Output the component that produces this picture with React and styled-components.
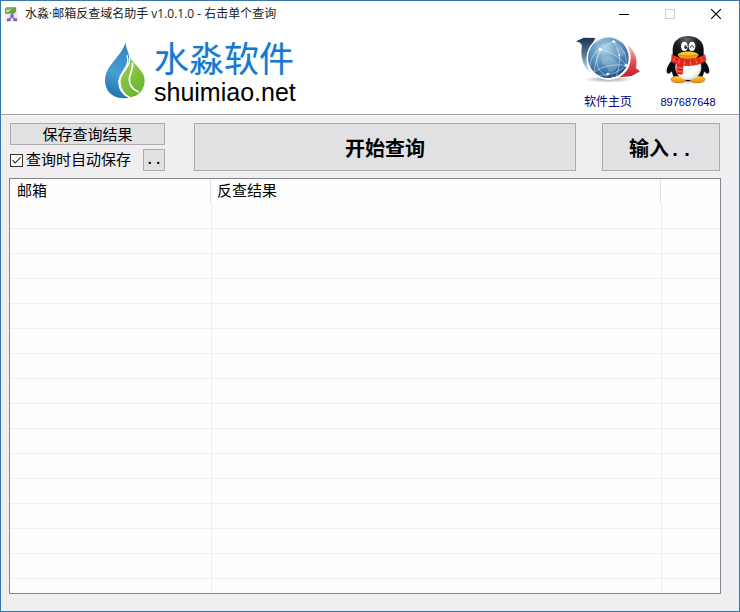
import React, { useState } from "react";
import styled, { createGlobalStyle } from "styled-components";

const GlobalStyle = createGlobalStyle`
* {
    box-sizing: border-box;
}
body {
    margin: 0;
    background: #f0eef1;
    font-family: "Liberation Sans", "Noto Sans CJK SC", sans-serif;
    color: #000;
}
button {
    font-family: inherit;
    color: inherit;
    padding: 0;
}
`;

const Window = styled.div`
display: flex;
flex-direction: column;
height: 100vh;
border: 1px solid #3279a8;
border-top-color: #3b76ad;
background: #f0eef1;
box-shadow: inset 0 -1px #e0f4fc, inset -1px 0 #e0f4fc, inset 1px 0 #e6f1f8;
`;
const TitleBar = styled.header`
display: flex;
align-items: center;
height: 25px;
padding-left: 3px;
background: #fff;
`;
const Title = styled.h1`
flex: 1;
margin: 0 0 0 6px;
font: 12px/24px "Open Sans", "Noto Sans CJK SC", sans-serif;
color: #222;
white-space: nowrap;
`;
const CaptionButton = styled.button`
display: flex;
align-items: center;
justify-content: center;
width: 46px;
height: 24px;
border: 0;
background: none;
color: ${(props) => (props.disabled ? "#ccc" : "#000")};
`;
const Banner = styled.section`
display: flex;
justify-content: space-between;
height: 89px;
padding: 6px 11px 0 103px;
background: #fff;
border-bottom: 1px solid #a0a0a0;
`;
const Brand = styled.div`
display: flex;
align-items: flex-start;
gap: 8px;
padding-top: 10px;
`;
const BrandText = styled.div`
display: flex;
flex-direction: column;
`;
const BrandName = styled.span`
font: 35px/36px "Liberation Sans", "Noto Sans CJK SC", sans-serif;
color: #1b76d1;
text-shadow: 0 0 2px #b8f0d8;
`;
const BrandSite = styled.span`
font-size: 25px;
line-height: 28px;
`;
const Links = styled.nav`
display: flex;
`;
const IconLink = styled.a`
display: flex;
flex-direction: column;
align-items: center;
justify-content: space-between;
width: 80px;
height: 78px;
font-size: ${(props) => props.$size}px;
line-height: 16px;
color: #000080;
text-decoration: none;
`;
const Toolbar = styled.section`
display: flex;
margin: 0 1px;
padding: 7px 18px 7px 8px;
border-top: 1px solid #f8f8f8;
`;
const SaveGroup = styled.div`
display: flex;
flex-direction: column;
gap: 4px;
width: 155px;
margin-right: 29px;
`;
const SaveRow = styled.div`
display: flex;
align-items: center;
justify-content: space-between;
`;
const PushButton = styled.button`
display: flex;
align-items: center;
justify-content: center;
width: ${(props) => props.$width || "auto"};
flex: ${(props) => (props.$grow ? 1 : "none")};
height: ${(props) => (props.$large ? 48 : 22)}px;
border: 1px solid #adabae;
background: #e1e0e2;
font: ${(props) => (props.$large ? "bold 20px" : "15px")} "Liberation Mono", "Noto Sans CJK SC", monospace;
`;
const InputButton = styled(PushButton)`
margin-left: 26px;
`;
const DotsButton = styled(PushButton)`
font-size: 14px;
font-weight: bold;
`;
const CheckLabel = styled.label`
display: flex;
align-items: center;
gap: 3px;
font-size: 15px;
line-height: 22px;
white-space: nowrap;
`;
const CheckBox = styled.input`
appearance: none;
width: 13px;
height: 13px;
margin: 0;
border: 1px solid #333;
background: #fff;
&:checked {
    background: #fff url("data:image/svg+xml,%3Csvg xmlns='http://www.w3.org/2000/svg' viewBox='0 0 11 11'%3E%3Cpath d='M1.5 5.2 4.2 8 9.7 2.3' fill='none' stroke='%23333' stroke-width='1.2'/%3E%3C/svg%3E") center / 11px 11px no-repeat;
}
`;
const ListPanel = styled.main`
flex: 1;
min-height: 0;
margin: 0 18px 17px 8px;
border: 1px solid #82858c;
background: #fefefe;
overflow: hidden;
`;
const ListTable = styled.table`
width: 100%;
table-layout: fixed;
border-collapse: separate;
border-spacing: 0;
font-size: 15px;
`;
const HeadCell = styled.th`
height: 25px;
padding: 0 1px 0 0;
font-weight: normal;
text-align: left;
width: ${(props) => props.$width || "auto"};
`;
const HeadLabel = styled.div`
height: 25px;
padding-left: ${(props) => (props.$first ? 7 : 5)}px;
line-height: 24px;
border-right: ${(props) => (props.$last ? "0" : "1px solid #e2e2e4")};
`;
const Cell = styled.td`
height: 25px;
padding: 0;
border-bottom: 1px solid #eeeff0;
border-right: ${(props) => (props.$last ? "0" : "1px solid #eeeff0")};
`;

const AppIcon = () => (
    <svg width="15" height="16" viewBox="0 0 15 16" aria-hidden="true">
        <rect x="1" y="1" width="13" height="15" rx="1" fill="#ecebf2" />
        <path d="M1 2.500 3 1h9v4.500L10.500 8H1z" fill="#8fbd62" />
        <path d="M1 2.500h8.500L12 1v4.500L9.500 7H1z" fill="#68a041" />
        <path d="M2 4h5M2 5.500h3" stroke="#e4f4ca" />
        <path d="M8 7v4M4.500 14 8 10.500l3.500 3.500" fill="none" stroke="#8e68c8" strokeWidth="1.500" />
        <path d="M3 12.500h3.500v2.500H3zM9.500 12.500H13v2.500H9.500zM6.500 8.500h3v2.500h-3z" fill="#8255c4" />
    </svg>
);

const DropLogo = () => (
    <svg width="42" height="57" viewBox="42 35 126 171" aria-hidden="true">
        <defs>
            <linearGradient id="dropBlue" x1="0.6" y1="0" x2="0.4" y2="1">
                <stop offset="0" stopColor="#2f86bd" />
                <stop offset="0.55" stopColor="#45a0d2" />
                <stop offset="1" stopColor="#1f73ae" />
            </linearGradient>
            <linearGradient id="dropGreen" x1="0" y1="0" x2="0.6" y2="1">
                <stop offset="0" stopColor="#a2d158" />
                <stop offset="1" stopColor="#69b52d" />
            </linearGradient>
        </defs>
        <path d="M106 36C99 76 45 103 45 151c0 31 24 53 55 53 7 0 13-1 17-2-22-9-33-29-31-48 3-29 35-43 31-77-2-14-8-22-11-41z" fill="url(#dropBlue)" />
        <path d="M119 78c11 29-28 50-27 78 1 20 11 35 29 45 26-3 43-24 43-51 0-29-30-41-45-72z" fill="url(#dropGreen)" />
        <path d="M111 75c12 36-24 49-24 80 0 20 12 36 31 46" fill="none" stroke="#fff" strokeWidth="4" />
        <path d="M127 98c4 19-8 30-9 48-1 17 9 31 28 39" fill="none" stroke="#fff" strokeWidth="5" />
    </svg>
);

const GlobeIcon = () => (
    <svg width="68" height="52" viewBox="0 0 204 156" aria-hidden="true">
        <defs>
            <radialGradient id="globe" cx="0.43" cy="0.28" r="0.72">
                <stop offset="0" stopColor="#a8cee7" />
                <stop offset="0.5" stopColor="#6398c2" />
                <stop offset="0.85" stopColor="#34699d" />
                <stop offset="1" stopColor="#204e80" />
            </radialGradient>
            <linearGradient id="arrowBlue" x1="0" y1="0" x2="0" y2="1">
                <stop offset="0" stopColor="#173557" />
                <stop offset="0.5" stopColor="#5c7898" />
                <stop offset="1" stopColor="#eef2f6" />
            </linearGradient>
            <linearGradient id="arrowRed" x1="0" y1="0" x2="0" y2="1">
                <stop offset="0" stopColor="#f9d0d0" />
                <stop offset="0.5" stopColor="#e25555" />
                <stop offset="1" stopColor="#c81925" />
            </linearGradient>
            <radialGradient id="globeShade">
                <stop offset="0" stopColor="#999" />
                <stop offset="1" stopColor="#fff" />
            </radialGradient>
        </defs>
        <ellipse cx="103" cy="142" rx="72" ry="10" fill="url(#globeShade)" />
        <path d="M6 28 29 17l35 1-8 16C36 55 32 90 48 123 24 99 19 68 24 41l-5-8z" fill="url(#arrowBlue)" />
        <path d="M158 38c27 17 33 45 28 71l12 9-25 14-37 4 12-18c20-22 28-50 10-80z" fill="url(#arrowRed)" />
        <circle cx="104" cy="78" r="66" fill="#fff" />
        <circle cx="103" cy="77" r="61" fill="url(#globe)" />
        <path d="M66 51c7-13 25-20 43-19l8 9-10 5 4 8-13 2-9 14-13-7-14 3zM83 76l19-4 18 9 14 15-10 19-18 10-9-23-12-9zM125 45l16 2 13 16-7 10-17-10z" fill="#bad6e8" opacity="0.3" />
        <g fill="none" stroke="#e3f2fa" strokeWidth="2" opacity="0.75">
            <path d="M79 52C59 87 68 119 101 132M79 52c-29 16-38 47-25 76M79 52c38 9 65 29 77 48M119 29c29 18 41 42 37 71M119 29C91 37 64 67 60 120M156 100c-26 26-62 34-102 28M119 29c21 32 25 66 2 117M60 120c19-15 57-25 96-20" />
        </g>
        <g fill="#fff">
            <circle cx="79" cy="52" r="5" />
            <circle cx="119" cy="29" r="4" />
            <circle cx="156" cy="100" r="4" />
            <circle cx="101" cy="126" r="4" />
            <circle cx="54" cy="128" r="4" />
            <circle cx="117" cy="138" r="4" />
            <circle cx="136" cy="70" r="3" />
        </g>
        <path d="M61 38c14-20 39-28 65-23-27 0-46 9-65 23z" fill="#fff" opacity="0.3" />
    </svg>
);

const PenguinIcon = () => (
    <svg width="44" height="52" viewBox="18 17 132 145" preserveAspectRatio="xMidYMax meet" aria-hidden="true">
        <defs>
            <radialGradient id="head" cx="0.45" cy="0.15" r="0.8">
                <stop offset="0" stopColor="#626875" />
                <stop offset="0.4" stopColor="#20232b" />
                <stop offset="1" stopColor="#020305" />
            </radialGradient>
            <radialGradient id="belly" cx="0.45" cy="0.45" r="0.65">
                <stop offset="0.6" stopColor="#fff" />
                <stop offset="1" stopColor="#c0c9d5" />
            </radialGradient>
            <linearGradient id="beak" x1="0" y1="0" x2="0" y2="1">
                <stop offset="0" stopColor="#ffd541" />
                <stop offset="1" stopColor="#e58808" />
            </linearGradient>
        </defs>
        <ellipse cx="84" cy="155" rx="50" ry="6" fill="#ddd" />
        <path d="M42 84C26 98 15 122 22 130c6 5 14-6 20-12zM126 84c16 14 27 38 20 46-6 5-14-6-20-12z" fill="#0a0c11" />
        <path d="M40 88c-9 27-6 58 16 66h56c22-8 25-39 16-66z" fill="#090b10" />
        <ellipse cx="56" cy="148" rx="23" ry="10" fill="url(#beak)" stroke="#c97006" strokeWidth="2" />
        <ellipse cx="112" cy="148" rx="23" ry="10" fill="url(#beak)" stroke="#c97006" strokeWidth="2" />
        <ellipse cx="85" cy="112" rx="39" ry="38" fill="url(#belly)" />
        <path d="M38 82V58c0-24 20-40 46-40s47 16 47 40v24c-12 12-79 12-93 0z" fill="url(#head)" />
        <ellipse cx="73" cy="49" rx="10" ry="14" fill="#fff" />
        <ellipse cx="96" cy="49" rx="10" ry="14" fill="#fff" />
        <ellipse cx="77" cy="51" rx="4" ry="6" fill="#080a0d" />
        <circle cx="78" cy="48" r="2" fill="#fff" />
        <path d="M91 53c2-8 8-8 10 0" fill="none" stroke="#111" strokeWidth="3" />
        <path d="M53 74c8-13 54-13 63 0-8 21-54 21-63 0z" fill="url(#beak)" />
        <path d="M54 74c18 6 42 6 61 0" fill="none" stroke="#c67508" strokeWidth="2" />
        <path d="M35 72c25 18 71 20 100 1l4 18c-21 21-78 22-106 4z" fill="#e52a20" />
        <path d="m50 99 20 5-1 27c-6 4-14 3-20-1z" fill="#dd241e" />
        <path d="m44 82-3 11M59 88l-3 13M75 91l-2 13M91 91l1 13M107 87l3 13M121 82l5 11M52 112l17 3M51 123l17 3" stroke="#ff7c60" strokeWidth="3" />
        <path d="M39 83c26 15 69 15 96-1" fill="none" stroke="#b51616" strokeWidth="2" opacity="0.6" />
    </svg>
);

const columns = [
    { label: "邮箱", width: "202px" },
    { label: "反查结果" },
    { label: "", width: "58px" },
];
const rows = Array.from({ length: 16 }, (_, i) => i);

const App = () => {
    const [autoSave, setAutoSave] = useState(true);
    return (
        <>
            <GlobalStyle />
            <Window>
                <TitleBar>
                    <AppIcon />
                    <Title>水淼·邮箱反查域名助手 v1.0.1.0 - 右击单个查询</Title>
                    <CaptionButton aria-label="最小化">
                        <svg width="10" height="10"><path d="M0 5.500h10" stroke="currentColor" /></svg>
                    </CaptionButton>
                    <CaptionButton aria-label="最大化" disabled>
                        <svg width="10" height="10"><path d="M.5.5h9v9h-9z" fill="none" stroke="currentColor" /></svg>
                    </CaptionButton>
                    <CaptionButton aria-label="关闭">
                        <svg width="10" height="10"><path d="m0 0 10 10M10 0 0 10" stroke="currentColor" strokeWidth="1.200" /></svg>
                    </CaptionButton>
                </TitleBar>
                <Banner>
                    <Brand>
                        <DropLogo />
                        <BrandText>
                            <BrandName>水淼软件</BrandName>
                            <BrandSite>shuimiao.net</BrandSite>
                        </BrandText>
                    </Brand>
                    <Links>
                        <IconLink href="#home" $size={12}>
                            <GlobeIcon />
                            软件主页
                        </IconLink>
                        <IconLink href="#qq" $size={11}>
                            <PenguinIcon />
                            897687648
                        </IconLink>
                    </Links>
                </Banner>
                <Toolbar>
                    <SaveGroup>
                        <PushButton>保存查询结果</PushButton>
                        <SaveRow>
                            <CheckLabel>
                                <CheckBox
                                    type="checkbox"
                                    checked={autoSave}
                                    onChange={(e) => setAutoSave(e.target.checked)}
                                />
                                查询时自动保存
                            </CheckLabel>
                            <DotsButton $width="22px">..</DotsButton>
                        </SaveRow>
                    </SaveGroup>
                    <PushButton $large $grow>开始查询</PushButton>
                    <InputButton $large $width="118px">输入..</InputButton>
                </Toolbar>
                <ListPanel>
                    <ListTable>
                        <thead>
                            <tr>
                                {columns.map((col, i) => (
                                    <HeadCell key={i} $width={col.width}>
                                        <HeadLabel $first={i === 0} $last={i === 2}>{col.label}</HeadLabel>
                                    </HeadCell>
                                ))}
                            </tr>
                        </thead>
                        <tbody>
                            {rows.map((row) => (
                                <tr key={row}>
                                    {columns.map((col, i) => (
                                        <Cell key={i} $last={i === 2} />
                                    ))}
                                </tr>
                            ))}
                        </tbody>
                    </ListTable>
                </ListPanel>
            </Window>
        </>
    );
};
export default App;
